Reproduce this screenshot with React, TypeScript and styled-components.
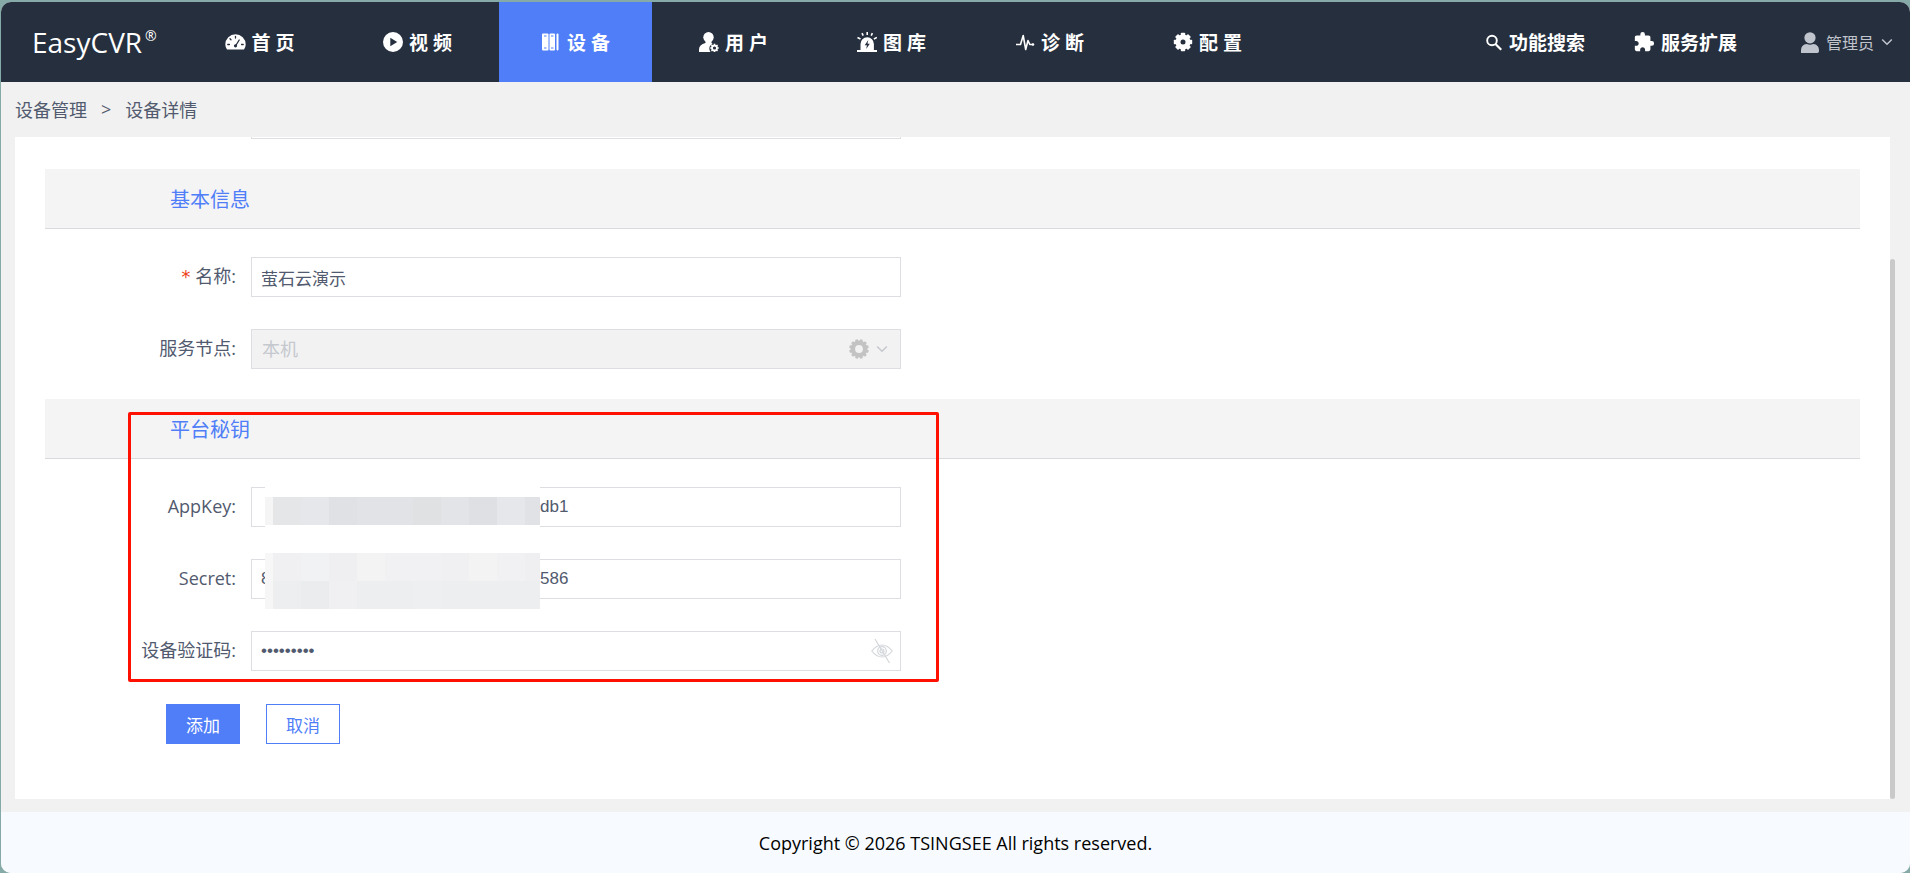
import React from "react";
import styled, { createGlobalStyle } from "styled-components";
import { MdExtension } from "react-icons/md";

const ink = "#515a6e";
const blue = "#4f7ef8";
const navy = "#262f3e";
const line = "#dcdee2";

const GlobalStyle = createGlobalStyle`
  *, *::before, *::after { box-sizing: border-box; }
  body {
    margin: 0;
    background: #86aaa7;
    font-family: "Open Sans", "Noto Sans CJK SC", sans-serif;
    color: ${ink};
  }
  a { color: inherit; text-decoration: none; }
`;

const Page = styled.div`
  display: flex;
  flex-direction: column;
  height: 100vh;
  min-height: 640px;
  padding: 2px 0 0 1px;
`;

const Frame = styled.div`
  flex: 1;
  min-height: 0;
  display: flex;
  flex-direction: column;
  border-radius: 10px;
  overflow: hidden;
  background: #f1f1f1;
`;

const Header = styled.header`
  display: flex;
  flex: none;
  height: 80px;
  padding-right: 17px;
  background: ${navy};
  color: #fff;
  white-space: nowrap;
`;

const Logo = styled.a`
  flex: none;
  display: flex;
  align-items: center;
  width: 182px;
  padding-left: 31px;
  font-size: 28px;
  line-height: 40px;
`;

const Registered = styled.sup`
  align-self: flex-start;
  margin: 24px 0 0 3px;
  font-size: 14px;
  line-height: 20px;
`;

const Nav = styled.nav`
  display: flex;
  gap: 5px;
`;

const NavItem = styled.a<{ $active?: boolean }>`
  display: flex;
  align-items: center;
  justify-content: center;
  gap: 6px;
  width: 153px;
  font-size: 19px;
  font-weight: 700;
  background: ${(p) => (p.$active ? blue : "transparent")};
`;

const Tools = styled.div`
  display: flex;
  align-items: center;
  margin-left: auto;
`;

const Tool = styled.a<{ $gap: number }>`
  display: flex;
  align-items: center;
  gap: 6px;
  margin-right: ${(p) => p.$gap}px;
  font-size: 19px;
  font-weight: 700;
`;

const Account = styled.button`
  display: flex;
  align-items: center;
  gap: 7px;
  padding: 0;
  border: 0;
  background: none;
  color: #c0c4cc;
  font: inherit;
  font-size: 16px;
`;

const Breadcrumb = styled.nav`
  display: flex;
  align-items: center;
  flex: none;
  gap: 14px;
  height: 55px;
  padding: 0 0 2px 14px;
  font-size: 18px;
`;

const Body = styled.div`
  display: flex;
  flex: 1;
  min-height: 0;
  padding: 0 15px 13px 14px;
`;

const Panel = styled.main`
  flex: 1;
  min-width: 0;
  overflow: hidden;
  background: #fff;
`;

const Form = styled.form`
  display: flex;
  flex-direction: column;
  justify-content: flex-end;
  height: 100%;
  padding: 0 30px 55px;
  & > * { flex: none; }
`;

const Track = styled.div`
  display: flex;
  flex-direction: column;
  justify-content: flex-end;
  width: 5px;
`;

const Thumb = styled.div`
  height: calc(82% - 3px);
  border-radius: 3px;
  background: #c9c9c9;
`;

const Group = styled.section`
  position: relative;
  margin-top: 30px;
`;

const GroupTitle = styled.h2`
  height: 60px;
  margin: 0 0 28px;
  padding-left: 125px;
  border-bottom: 1px solid #d8dadd;
  background: #f4f4f4;
  color: ${blue};
  font-size: 20px;
  font-weight: 400;
  line-height: 62px;
`;

const Rows = styled.div`
  display: grid;
  gap: 32px;
`;

const Row = styled.div`
  display: flex;
  height: 40px;
`;

const Label = styled.label`
  flex: none;
  width: 206px;
  padding-right: 15px;
  font-size: 18px;
  line-height: 38px;
  text-align: right;
  white-space: nowrap;
`;

const Required = styled.span`
  margin-right: 4px;
  color: #ed4014;
  font-family: "DejaVu Sans Mono", monospace;
`;

const Field = styled.div<{ $disabled?: boolean }>`
  position: relative;
  display: flex;
  flex: 0 1 650px;
  border: 1px solid ${line};
  background: ${(p) => (p.$disabled ? "#f2f2f2" : "#fff")};
`;

const Input = styled.input`
  flex: 1;
  min-width: 0;
  padding: 0 9px;
  border: 0;
  outline: 0;
  background: none;
  color: ${ink};
  font-family: "Liberation Sans", "Noto Sans CJK SC", sans-serif;
  font-size: 17px;
`;

const Prefix = styled.span`
  flex: none;
  width: 279px;
  padding-left: 9px;
  font-family: "Liberation Sans", sans-serif;
  font-size: 17px;
  line-height: 38px;
`;

const Select = styled.select`
  flex: 1;
  appearance: none;
  padding: 0 10px;
  border: 0;
  background: none;
  color: #c5c8ce;
  opacity: 1;
  font: inherit;
  font-size: 18px;
`;

const Trailing = styled.span<{ $right: number }>`
  position: absolute;
  top: 0;
  right: ${(p) => p.$right}px;
  display: flex;
  align-items: center;
  gap: 7px;
  height: 38px;
  pointer-events: none;
`;

const EyeButton = styled.button`
  display: flex;
  align-items: center;
  padding: 0 7px;
  border: 0;
  background: none;
`;

const Outline = styled.div`
  position: absolute;
  top: 13px;
  bottom: -11px;
  left: 83px;
  width: 811px;
  border: 3px solid #ff1000;
  border-radius: 2px;
  pointer-events: none;
`;

const Mosaic = styled.div`
  position: absolute;
  top: 86px;
  left: 220px;
  width: 275px;
  padding: 12px 0 4px;
  background: #fff;
`;

const MosaicRow = styled.div<{ $space?: number }>`
  display: grid;
  grid-template-columns: 8px repeat(9, 28px) 15px;
  height: 28px;
  margin-bottom: ${(p) => p.$space ?? 0}px;
`;

const Cell = styled.span<{ $tone: string }>`
  background: ${(p) => p.$tone};
`;

const Actions = styled.div`
  display: flex;
  gap: 26px;
  margin-top: 33px;
  padding-left: 121px;
`;

const Button = styled.button<{ $primary?: boolean }>`
  height: 40px;
  padding: 0 19px;
  border: 1px solid ${blue};
  background: ${(p) => (p.$primary ? blue : "#fff")};
  color: ${(p) => (p.$primary ? "#fff" : blue)};
  font: inherit;
  font-size: 17px;
`;

const Footer = styled.footer`
  flex: none;
  height: 61px;
  background: #f7fbff;
  color: #000;
  font-size: 18px;
  line-height: 62px;
  text-align: center;
`;

const Svg = ({ w = 20, h = 20, box, children }: { w?: number; h?: number; box?: string; children: React.ReactNode }) => (
  <svg width={w} height={h} viewBox={box ?? `0 0 ${w} ${h}`} fill="none" aria-hidden="true">
    {children}
  </svg>
);

const angles = (n: number) => Array.from({ length: n }, (_, i) => (360 / n) * i);

const DashboardIcon = () => (
  <Svg w={21}>
    <path d="M2 17.5Q.3 15 .3 12.500A10.200 10.200 0 0 1 20.700 12.500Q20.700 15 19 17.500Z" fill="#fff" />
    <g stroke={navy} strokeWidth="1.300" strokeLinecap="round">
      <path d="M10.500 4.500v1.500M5 6.800l1 1M2.800 12.500h1.600M16.600 12.500h1.600M10.800 13.500l3.400-5.500" />
    </g>
    <circle cx="10.500" cy="13.800" r="1.600" fill={navy} />
  </Svg>
);

const PlayIcon = () => (
  <Svg>
    <circle cx="10" cy="10" r="10" fill="#fff" />
    <path d="M7.300 5.800v8.400l6.900-4.200z" fill={navy} />
  </Svg>
);

const DeviceIcon = () => (
  <Svg>
    <rect x="1" y="1.500" width="6.500" height="17" rx="1" fill="#fff" />
    <rect x="8.500" y="1.500" width="5.500" height="17" rx="1" fill="#fff" />
    <rect x="15.500" y="1.500" width="2" height="17" rx="1" fill="#fff" />
    <path d="M3 4h2.500M3 16h2.500M10 4h2.500M10 16h2.500" stroke={blue} strokeWidth="1" />
  </Svg>
);

const UserGearIcon = () => (
  <Svg>
    <circle cx="9.500" cy="5.200" r="5.200" fill="#fff" />
    <path d="M6.500 8.500h6v2.500l1 .7Q10.300 13.500 10.300 16.300q0 2 1.200 3.700H0v-2.500Q0 12.500 6.500 11z" fill="#fff" />
    <g transform="translate(15.500 16)">
      <circle r="2.500" stroke="#fff" strokeWidth="1.800" />
      {angles(8).map((a) => (
        <rect key={a} x="-.7" y="-4.300" width="1.400" height="1.600" fill="#fff" transform={`rotate(${a})`} />
      ))}
    </g>
  </Svg>
);

const SirenIcon = () => (
  <Svg>
    <path d="M3.500 18v-6a6.700 6.700 0 0 1 13.400 0v6H20v2H0v-2z" fill="#fff" />
    <path d="M10.200 0v3M5 1.200l1.200 2.500M15.400 1.200l-1.200 2.500M.5 5.500l3 1.500M19.900 5.500l-3 1.500" stroke="#fff" strokeWidth="1.600" />
    <path d="M11.300 8l-3.600 5.200h2.200L9.200 17l3.600-5.300h-2.300z" fill={navy} />
  </Svg>
);

const PulseIcon = () => (
  <Svg>
    <path d="M1 12.500h4.500l2.700-9 2.500 14 2.300-9 1.800 4H18" stroke="#fff" strokeWidth="1.600" strokeLinejoin="round" />
    <circle cx="18" cy="12.500" r="1.300" fill="#fff" />
  </Svg>
);

const CogIcon = () => (
  <Svg>
    <circle cx="10" cy="10" r="5" stroke="#fff" strokeWidth="5" />
    {angles(8).map((a) => (
      <rect key={a} x="7.800" y=".8" width="4.400" height="4" rx=".8" fill="#fff" transform={`rotate(${a} 10 10)`} />
    ))}
  </Svg>
);

const SearchIcon = () => (
  <Svg w={18} h={18}>
    <circle cx="7" cy="7.500" r="4.800" stroke="#fff" strokeWidth="1.900" />
    <path d="M10.500 11l5.700 5.700" stroke="#fff" strokeWidth="2.200" />
  </Svg>
);

const PersonIcon = () => (
  <Svg w={18} h={21}>
    <circle cx="9" cy="5.800" r="5.600" fill="currentColor" />
    <path d="M0 21v-2.500q0-6 5.800-6.500 3.200 1.500 6.400 0 5.800.5 5.800 6.500v.8q0 1.700-1.700 1.700z" fill="currentColor" />
  </Svg>
);

const Chevron = ({ color = "currentColor" }: { color?: string }) => (
  <Svg w={12} h={12}>
    <path d="M1.200 3.500L6 8.300l4.800-4.800" stroke={color} strokeWidth="1.500" />
  </Svg>
);

const RingGear = () => (
  <Svg>
    <circle cx="10" cy="10" r="6.200" stroke="#c3c3c3" strokeWidth="4.600" />
    {angles(12).map((a) => (
      <rect key={a} x="8.600" y=".2" width="2.800" height="3" rx=".5" fill="#c3c3c3" transform={`rotate(${a + 15} 10 10)`} />
    ))}
  </Svg>
);

const EyeOffIcon = () => (
  <Svg w={22} h={26}>
    <g stroke="#d3d6da" strokeWidth="1.200">
      <path d="M.8 13Q5.500 7 11 7t10.200 6Q16.500 19 11 19T.8 13z" />
      <circle cx="11" cy="13" r="4.300" />
      <circle cx="11" cy="13" r="2" />
      <path d="M4 1l14.500 24" />
    </g>
  </Svg>
);

const menu = [
  { text: "首 页", Icon: DashboardIcon },
  { text: "视 频", Icon: PlayIcon },
  { text: "设 备", Icon: DeviceIcon, active: true },
  { text: "用 户", Icon: UserGearIcon },
  { text: "图 库", Icon: SirenIcon },
  { text: "诊 断", Icon: PulseIcon },
  { text: "配 置", Icon: CogIcon },
];

const keyTones = ["#f5f5f6", "#e5e6e7", "#e6e7eb", "#e0e1e5", "#e2e3e7", "#e2e3e7", "#e0e1e3", "#e3e4e8", "#dfe0e4", "#e6e7eb", "#e1e2e6"];
const secretTop = ["#f7f7f8", "#f0f0f2", "#f0f2f4", "#efeff2", "#f3f3f3", "#f1f1f3", "#f1f1f3", "#f0f0f2", "#f3f3f3", "#f1f1f3", "#efeff2"];
const secretBottom = ["#f6f6f7", "#edeef0", "#ebecee", "#f0f0f2", "#edeef0", "#edeef0", "#eeeff1", "#edeef0", "#edeef0", "#edeef0", "#edeef0"];

const Tones = ({ tones, space }: { tones: string[]; space?: number }) => (
  <MosaicRow $space={space}>
    {tones.map((tone, i) => (
      <Cell key={i} $tone={tone} />
    ))}
  </MosaicRow>
);

export default function App() {
  return (
    <Page>
      <GlobalStyle />
      <Frame>
        <Header>
          <Logo href="#">
            EasyCVR<Registered>®</Registered>
          </Logo>
          <Nav>
            {menu.map(({ text, Icon, active }) => (
              <NavItem key={text} href="#" $active={active}>
                <Icon />
                {text}
              </NavItem>
            ))}
          </Nav>
          <Tools>
            <Tool href="#" $gap={48}>
              <SearchIcon />
              功能搜索
            </Tool>
            <Tool href="#" $gap={64}>
              <MdExtension size={22} />
              服务扩展
            </Tool>
            <Account type="button">
              <PersonIcon />
              管理员
              <Chevron />
            </Account>
          </Tools>
        </Header>
        <Breadcrumb>
          <a href="#">设备管理</a>
          <span>&gt;</span>
          <a href="#">设备详情</a>
        </Breadcrumb>
        <Body>
          <Panel>
            <Form onSubmit={(e) => e.preventDefault()}>
              <Row>
                <Label as="span" />
                <Field>
                  <Input aria-label="接入类型" readOnly />
                </Field>
              </Row>
              <Group>
                <GroupTitle>基本信息</GroupTitle>
                <Rows>
                  <Row>
                    <Label htmlFor="name">
                      <Required>*</Required>名称:
                    </Label>
                    <Field>
                      <Input id="name" defaultValue="萤石云演示" />
                    </Field>
                  </Row>
                  <Row>
                    <Label htmlFor="node">服务节点:</Label>
                    <Field $disabled>
                      <Select id="node" disabled>
                        <option>本机</option>
                      </Select>
                      <Trailing $right={12}>
                        <RingGear />
                        <Chevron color="#c5c8ce" />
                      </Trailing>
                    </Field>
                  </Row>
                </Rows>
              </Group>
              <Group>
                <GroupTitle>平台秘钥</GroupTitle>
                <Rows>
                  <Row>
                    <Label htmlFor="appkey">AppKey:</Label>
                    <Field>
                      <Prefix />
                      <Input id="appkey" defaultValue="db1" />
                    </Field>
                  </Row>
                  <Row>
                    <Label htmlFor="secret">Secret:</Label>
                    <Field>
                      <Prefix>8</Prefix>
                      <Input id="secret" defaultValue="586" />
                    </Field>
                  </Row>
                  <Row>
                    <Label htmlFor="code">设备验证码:</Label>
                    <Field>
                      <Input id="code" type="password" defaultValue="123456789" />
                      <EyeButton type="button" aria-label="显示验证码">
                        <EyeOffIcon />
                      </EyeButton>
                    </Field>
                  </Row>
                </Rows>
                <Mosaic>
                  <Tones tones={keyTones} space={28} />
                  <Tones tones={secretTop} />
                  <Tones tones={secretBottom} />
                </Mosaic>
                <Outline />
              </Group>
              <Actions>
                <Button type="submit" $primary>
                  添加
                </Button>
                <Button type="button">取消</Button>
              </Actions>
            </Form>
          </Panel>
          <Track>
            <Thumb />
          </Track>
        </Body>
        <Footer>Copyright © 2026 TSINGSEE All rights reserved.</Footer>
      </Frame>
    </Page>
  );
}
